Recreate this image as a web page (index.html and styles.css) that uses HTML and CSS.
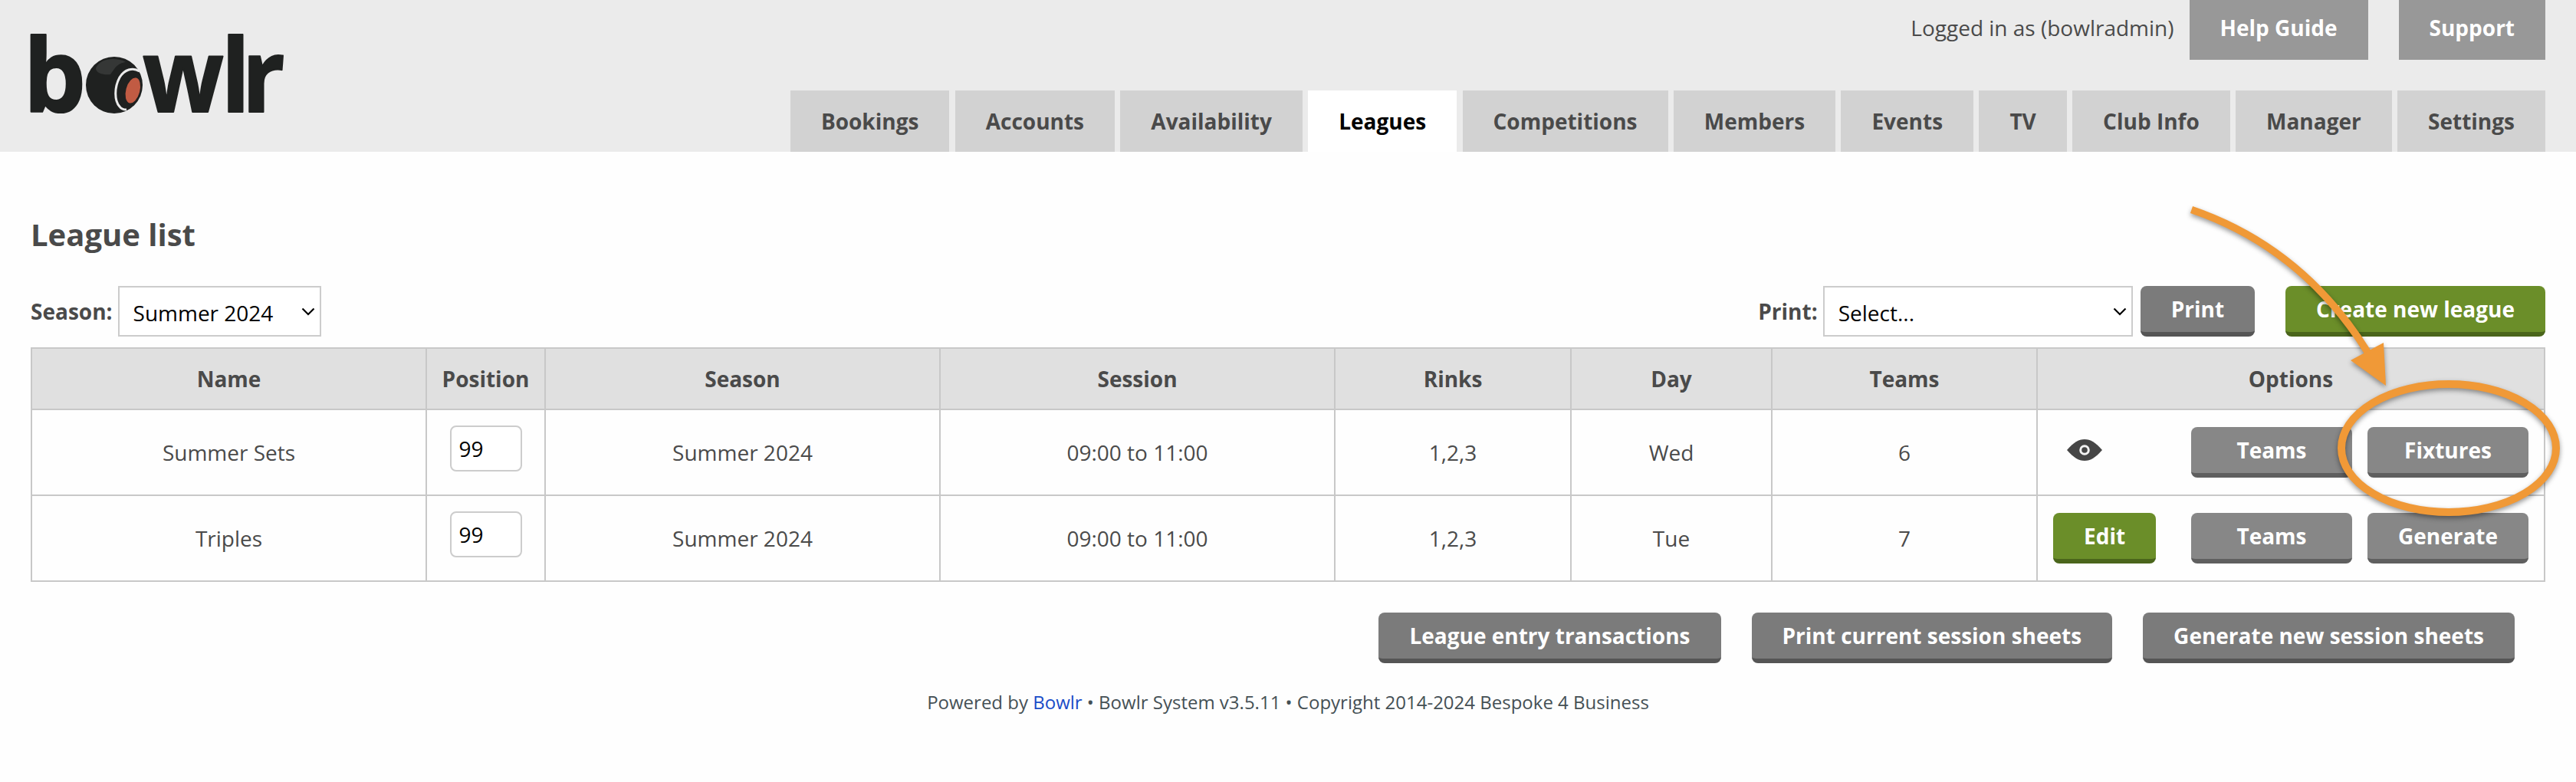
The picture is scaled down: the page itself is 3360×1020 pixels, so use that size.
FILE: index.html
```
<!DOCTYPE html>
<html lang="en">
<head>
  <meta charset="UTF-8" />
  <meta name="viewport" content="width=device-width, initial-scale=1.0" />
  <title>Bowlr - League list</title>
  <link rel="stylesheet" href="styles.css">
</head>
<body>
  <header class="header">
    <a class="logo" href="#">
      <svg width="340" height="120" viewBox="0 0 340 120" role="img" aria-label="bowlr">
        <g class="logo-text">
          <text transform="translate(-9.500 110) scale(.97 1)">b</text>
          <text transform="translate(146 110) scale(.93 1)" x="0 110.300 139.300">wlr</text>
        </g>
        <circle cx="109" cy="75" r="37" fill="#1f2120" />
        <path d="M85 53c3-8 12-12 22-12 6 0 12 1 17 4-8 1-12 5-15 9l-5 7c-8 1-19-1-19-8z" fill="#353736" />
        <path d="M142 57c-9-6-20-2-26 8-7 13-7 30 0 38 2 3 5 4 9 4" fill="none" stroke="#ebebeb" stroke-width="3" />
        <ellipse cx="133.300" cy="82" rx="9" ry="17" transform="rotate(15 133.300 82)" fill="#c15b43" />
      </svg>
    </a>
    <div class="header-right">
      <div class="user-bar">
        <span>Logged in as (bowlradmin)</span>
        <a class="help" href="#">Help Guide</a>
        <a class="help" href="#">Support</a>
      </div>
      <nav class="tabs">
        <a href="#">Bookings</a>
        <a href="#">Accounts</a>
        <a href="#">Availability</a>
        <a class="active" href="#">Leagues</a>
        <a href="#">Competitions</a>
        <a href="#">Members</a>
        <a href="#">Events</a>
        <a href="#">TV</a>
        <a href="#">Club Info</a>
        <a href="#">Manager</a>
        <a href="#">Settings</a>
      </nav>
    </div>
  </header>

  <main class="content">
    <h1>League list</h1>

    <div class="toolbar">
      <label for="season">Season:</label>
      <div class="select season-select">
        <select id="season"><option>Summer 2024</option></select>
        <svg class="chevron" width="18" height="11" viewBox="0 0 18 11"><path d="M1.500 1.500L9 9l7.500-7.500" /></svg>
      </div>
      <label class="print-label" for="print">Print:</label>
      <div class="select print-select">
        <select id="print"><option>Select...</option></select>
        <svg class="chevron" width="18" height="11" viewBox="0 0 18 11"><path d="M1.500 1.500L9 9l7.500-7.500" /></svg>
      </div>
      <button class="btn print-btn">Print</button>
      <button class="btn green create-btn">Create new league</button>
    </div>

    <table class="leagues">
      <colgroup>
        <col class="col-name"><col class="col-position"><col class="col-season"><col class="col-session">
        <col class="col-rinks"><col class="col-day"><col class="col-teams"><col class="col-options">
      </colgroup>
      <thead>
        <tr>
          <th>Name</th>
          <th>Position</th>
          <th>Season</th>
          <th>Session</th>
          <th>Rinks</th>
          <th>Day</th>
          <th>Teams</th>
          <th>Options</th>
        </tr>
      </thead>
      <tbody>
        <tr>
          <td>Summer Sets</td>
          <td><input type="text" value="99"></td>
          <td>Summer 2024</td>
          <td>09:00 to 11:00</td>
          <td>1,2,3</td>
          <td>Wed</td>
          <td>6</td>
          <td>
            <div class="options">
              <span class="first-option view">
                <svg width="46" height="30" viewBox="0 0 46 30">
                  <path d="M0 15C9 5 15 1 23 1s14 4 23 14C37 25 31 29 23 29S9 25 0 15z" fill="#464646" />
                  <circle cx="23" cy="15" r="5.300" fill="none" stroke="#f2f2f2" stroke-width="3" />
                </svg>
              </span>
              <button class="btn light">Teams</button>
              <button class="btn light">Fixtures</button>
            </div>
          </td>
        </tr>
        <tr>
          <td>Triples</td>
          <td><input type="text" value="99"></td>
          <td>Summer 2024</td>
          <td>09:00 to 11:00</td>
          <td>1,2,3</td>
          <td>Tue</td>
          <td>7</td>
          <td>
            <div class="options">
              <span class="first-option"><button class="btn green">Edit</button></span>
              <button class="btn light">Teams</button>
              <button class="btn light">Generate</button>
            </div>
          </td>
        </tr>
      </tbody>
    </table>

    <div class="actions">
      <button class="btn">League entry transactions</button>
      <button class="btn">Print current session sheets</button>
      <button class="btn">Generate new session sheets</button>
    </div>
  </main>

  <footer class="footer">Powered by <a href="#">Bowlr</a> • Bowlr System v3.5.11 • Copyright 2014-2024 Bespoke 4 Business</footer>

  <!-- Arrow and ring pointing at the Fixtures button -->
  <svg class="annotation" width="520" height="450" viewBox="0 0 520 450">
    <path d="M18.500 23.500Q163 73 248 209" fill="none" stroke="#f09937" stroke-width="9.500" />
    <path d="M269 197L272 253 226 220z" fill="#f09937" />
    <ellipse cx="354" cy="334.500" rx="140" ry="83.500" fill="none" stroke="#f09937" stroke-width="10" />
  </svg>
</body>
</html>
```
FILE: styles.css
```
* {
  box-sizing: border-box;
}

body {
  position: relative;
  margin: 0;
  background: #fefefe;
  color: #4a4a4a;
  font-family: "Open Sans", sans-serif;
  font-size: 28px;
  line-height: 38px;
}

a {
  text-decoration: none;
}

.header {
  display: flex;
  justify-content: space-between;
  height: 198px;
  padding: 0 40px;
  background: #ebebeb;
}

.logo {
  padding-top: 36px;
}

.logo svg {
  display: block;
  overflow: visible;
}

.logo-text {
  font-size: 133px;
  font-weight: 700;
  fill: #1f2120;
  stroke: #1f2120;
  stroke-width: 2;
  stroke-linejoin: round;
}

.header-right {
  display: flex;
  flex-direction: column;
  justify-content: space-between;
  align-items: flex-end;
}

.user-bar {
  display: flex;
  gap: 40px;
  line-height: 72px;
}

.user-bar span {
  margin-right: -20px;
}

.help {
  height: 78px;
  padding: 0 40px;
  background: #989898;
  color: #fff;
  font-weight: 700;
}

.tabs {
  display: flex;
  gap: 7.3px;
}

.tabs a {
  height: 80px;
  padding: 0 40px;
  background: #d2d2d2;
  color: #4a4a4a;
  font-weight: 700;
  line-height: 80px;
}

.tabs .active {
  background: #fff;
  color: #000;
}

.content {
  padding: 81px 40px 0;
}

h1 {
  margin: 0 0 40px;
  font-size: 40px;
  line-height: 54px;
}

.toolbar {
  display: flex;
  height: 66px;
  margin-bottom: 14px;
  line-height: 66px;
}

.toolbar label {
  font-weight: 700;
}

.select {
  position: relative;
}

.season-select {
  width: 265px;
  margin-left: 7px;
}

.print-label {
  margin-left: auto;
}

.print-select {
  width: 404px;
  margin: 0 10px 0 7px;
}

select {
  display: block;
  width: 100%;
  height: 66px;
  padding: 0 18px 5px;
  border: 2px solid #ccc;
  border-radius: 0;
  background: #fff;
  color: #000;
  font: inherit;
  appearance: none;
}

.chevron {
  position: absolute;
  top: 28px;
  right: 8px;
}

.chevron path {
  fill: none;
  stroke: #000;
  stroke-width: 2.2;
}

.btn {
  height: 66px;
  padding: 0 40px;
  border: 0;
  border-bottom: 6px solid #555;
  border-radius: 8px;
  background: #7b7b7b;
  color: #fff;
  font: inherit;
  font-weight: 700;
  line-height: 60px;
  white-space: nowrap;
}

.btn.green {
  border-color: #4a651b;
  background: #6b8e29;
}

.btn.light {
  width: 210px;
  padding: 0;
  border-color: #5f5f5f;
  background: #878787;
}

.create-btn {
  margin-left: 40px;
}

.leagues {
  width: 3280px;
  border-collapse: collapse;
  table-layout: fixed;
  text-align: center;
}

.col-name,
.col-season,
.col-session {
  width: 515px;
}

.col-position {
  width: 155px;
}

.col-rinks {
  width: 308px;
}

.col-day {
  width: 262px;
}

.col-teams {
  width: 346px;
}

.col-options {
  width: 662px;
}

.leagues th,
.leagues td {
  padding: 0;
  border: 2px solid #c8c8c8;
}

.leagues th {
  height: 80px;
  background: #e0e0e0;
}

.leagues td {
  height: 112px;
}

.leagues input {
  display: block;
  width: 94px;
  height: 60px;
  margin: 0 auto 10px;
  padding: 0 10px;
  border: 2px solid #ccc;
  border-radius: 8px;
  background: #fff;
  color: #000;
  font: inherit;
}

.options {
  display: flex;
  gap: 20px;
  padding: 0 20px;
}

.first-option {
  width: 160px;
  text-align: left;
}

.view {
  padding: 15px 0 0 18px;
}

.view svg {
  display: block;
}

.actions {
  display: flex;
  justify-content: flex-end;
  gap: 40px;
  padding: 40px 40px 0;
}

.footer {
  margin-top: 35px;
  color: #455055;
  font-size: 24px;
  line-height: 32px;
  text-align: center;
}

.footer a {
  color: #1a4cc8;
}

.annotation {
  position: absolute;
  top: 250px;
  left: 2840px;
  filter: drop-shadow(0 3px 3px rgba(0, 0, 0, 0.4));
  pointer-events: none;
}
```
